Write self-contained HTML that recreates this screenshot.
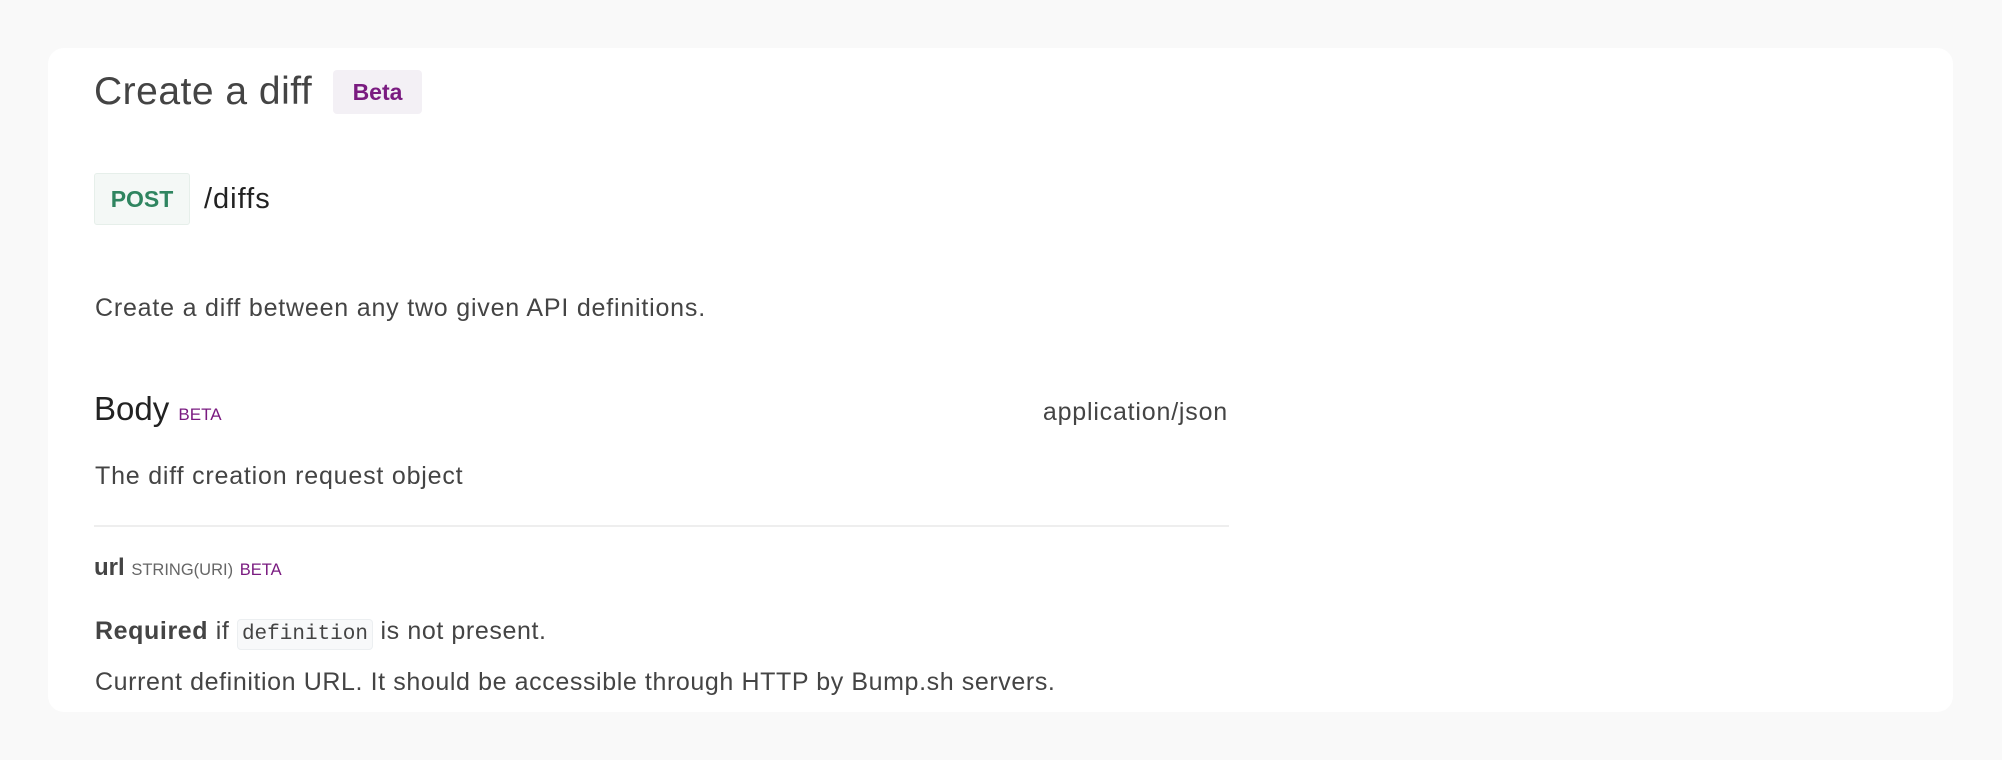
<!DOCTYPE html>
<html><head><meta charset="utf-8"><style>
*{margin:0;padding:0;box-sizing:border-box}
body{width:2002px;height:760px;background:#f9f9f9;font-family:"Liberation Sans",sans-serif;color:#444;position:relative;overflow:hidden}
.card{position:absolute;left:48px;top:48px;width:1905px;height:664px;background:#fff;border-radius:16px}
.a{position:absolute;white-space:nowrap}
.t{font-size:25px;letter-spacing:0.8px}
</style></head><body>
<div class="card"></div>
<div class="a" style="left:94px;top:70px;font-size:39px;color:#444;letter-spacing:0.5px">Create a diff</div>
<div class="a" style="left:333px;top:70px;width:89px;height:44px;background:#f3f0f5;border-radius:4px;color:#7a1b80;font-size:23px;font-weight:bold;text-align:center;line-height:44px">Beta</div>
<div class="a" style="left:94px;top:173px;width:96px;height:52px;background:#f4f8f6;border:1px solid #e6efea;border-radius:3px;color:#2f8560;font-size:23px;font-weight:bold;text-align:center;line-height:50px">POST</div>
<div class="a" style="left:204px;top:183px;font-size:29px;color:#222;letter-spacing:1px">/diffs</div>
<div class="a t" style="left:95px;top:294px">Create a diff between any two given API definitions.</div>
<div class="a" style="left:94px;top:390px;font-size:33px;color:#222">Body <span style="font-size:17px;color:#7a1b80">BETA</span></div>
<div class="a t" style="right:774px;top:398px">application/json</div>
<div class="a t" style="left:95px;top:462px">The diff creation request object</div>
<div class="a" style="left:94px;top:525px;width:1135px;height:2px;background:#eee"></div>
<div class="a" style="left:94px;top:554px;font-size:24px;color:#444"><b>url</b> <span style="font-size:16.5px;color:#666">STRING(URI)</span> <span style="font-size:16.5px;color:#7a1b80">BETA</span></div>
<div class="a t" style="left:95px;top:617px;letter-spacing:0.6px"><b>Required</b> if <span style="font-family:'Liberation Mono',monospace;font-size:21px;letter-spacing:0;background:#f8f9fa;border:1px solid #eceff1;border-radius:4px;padding:3px 4px">definition</span> is not present.</div>
<div class="a t" style="left:95px;top:668px;letter-spacing:0.6px">Current definition URL. It should be accessible through HTTP by Bump.sh servers.</div>
</body></html>
